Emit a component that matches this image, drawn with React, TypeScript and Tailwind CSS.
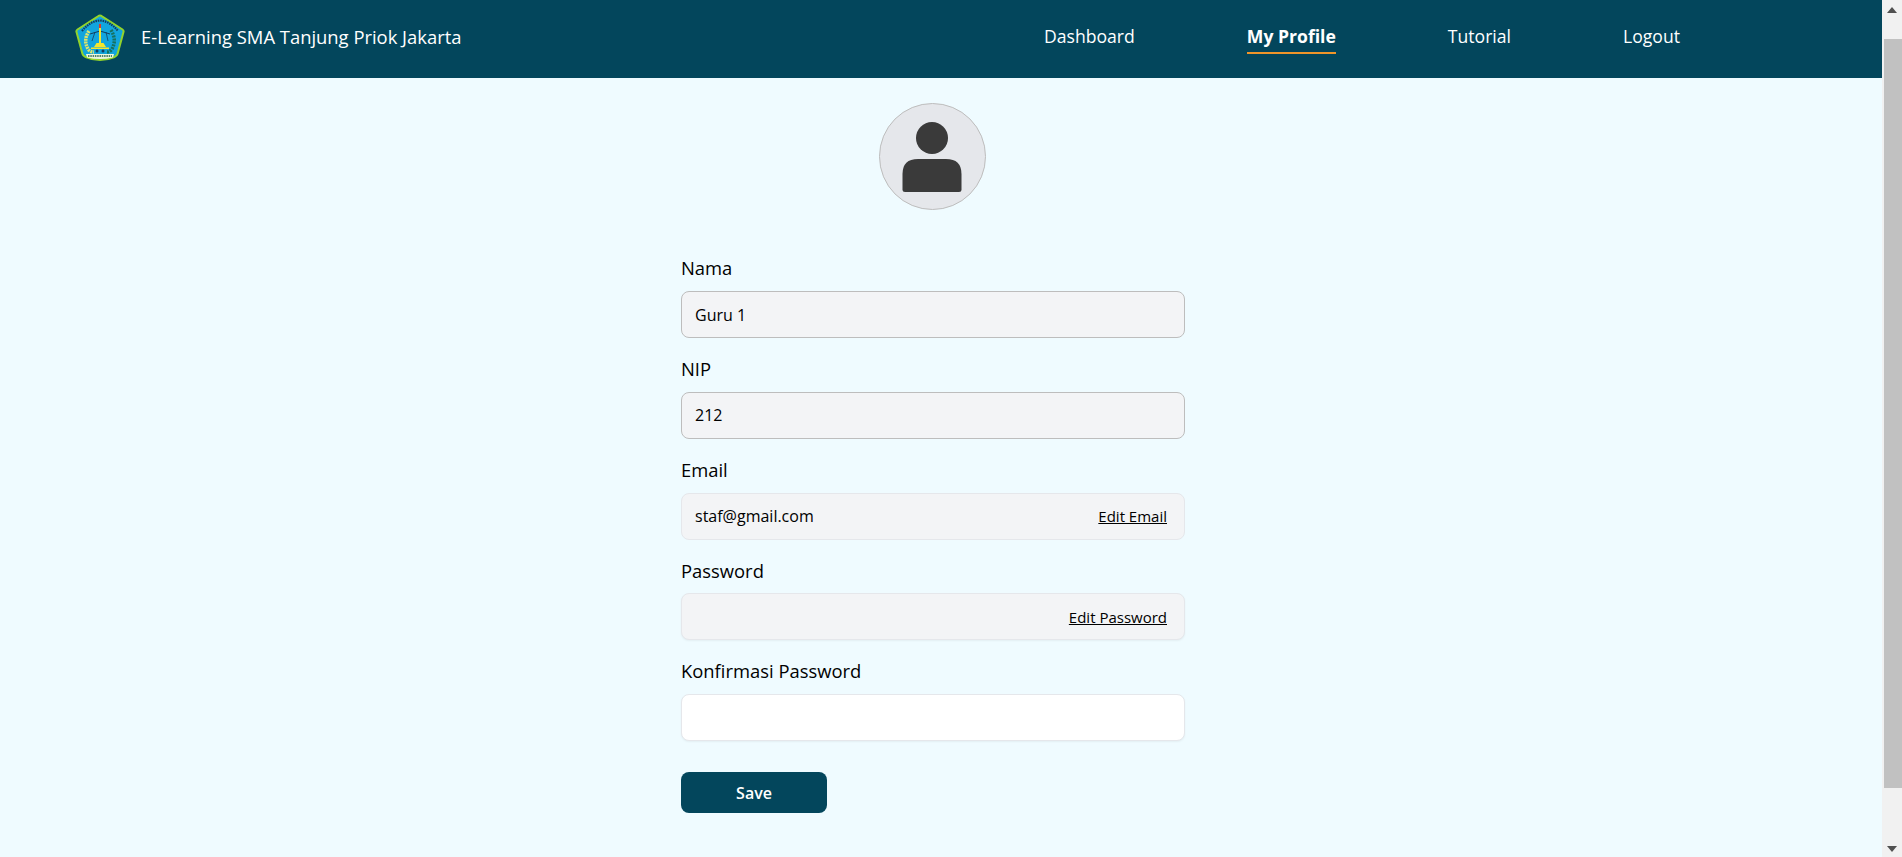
import React from 'react';

const fontStack = "font-['Open_Sans',sans-serif]";

const SchoolLogo: React.FC = () => (
  <svg viewBox="0 0 50 50" className="w-[50px] h-[50px] shrink-0">
    <path d="M25 1.500 Q26 1.500 27 2.300 L47.500 15.500 Q49 16.500 48.500 18 L42.500 40 Q42 42 39.500 43 Q25 49 10.500 43 Q8 42 7.500 40 L1.500 18 Q1 16.500 2.500 15.500 L23 2.300 Q24 1.500 25 1.500 Z" fill="#12a5dd" stroke="#93d32b" strokeWidth="2" strokeLinejoin="round" />
    {/* lettering arc */}
    <path d="M7 17 Q15 7 25 6.500 Q35 7 43 17" fill="none" stroke="#123f5f" strokeWidth="2.200" strokeDasharray="1.600 0.800" />
    {/* scales */}
    <path d="M15 20 L25 17 L35 20" fill="none" stroke="#123f5f" strokeWidth="1" />
    <path d="M20 18 L17 27 M31 18 L33 27" fill="none" stroke="#123f5f" strokeWidth="0.800" />
    {/* tower */}
    <path d="M24 14h2v15h-2z" fill="#f4e72e" />
    <path d="M24 10h2v4h-2z" fill="#d93a2e" />
    <path d="M21.500 29h7l2.500 4h-12z" fill="#f4e72e" />
    <path d="M16 33.500h18v1.500H16z" fill="#f4e72e" />
    <circle cx="22" cy="37" r="1.500" fill="#123f5f" />
    <circle cx="28" cy="37" r="1.500" fill="#123f5f" />
    {/* rice and cotton */}
    <path d="M14 17 Q8 26 13 35 Q15 38 19 38" fill="none" stroke="#dfe56b" strokeWidth="3.500" strokeDasharray="2 0.800" />
    <path d="M36 16 Q42 26 37 35 Q35 38 32 38" fill="none" stroke="#16715f" strokeWidth="3.500" strokeDasharray="2 1" />
    {/* banner */}
    <path d="M11 40 H39 L38 43.500 Q25 46.500 12 43.500 Z" fill="#eef6dd" />
    <path d="M13 42 H37" stroke="#1f5d48" strokeWidth="1.600" strokeDasharray="1.500 0.800" />
  </svg>
);

const AvatarIcon: React.FC = () => (
  <div className="w-[107px] h-[107px] mr-[2px] rounded-full bg-[#e5e7eb] border border-[#bdbdbd] flex flex-col items-center justify-center">
    <svg viewBox="0 0 60 70" className="w-[60px] h-[70px]">
      <circle cx="30" cy="16" r="16" fill="#3a3a3a" />
      <path d="M0.500 68 V52 Q0.500 37 16 37 H44 Q59.500 37 59.500 52 V68 Q59.500 70 57 70 H3 Q0.500 70 0.500 68 Z" fill="#3a3a3a" />
    </svg>
  </div>
);

const Field: React.FC<{ label: string; children: React.ReactNode }> = ({ label, children }) => (
  <div className="flex flex-col gap-[10px]">
    <label className="text-[18.4px] leading-[25.75px] text-black">{label}</label>
    {children}
  </div>
);

const NavLink: React.FC<{ label: string; active?: boolean }> = ({ label, active }) => (
  <a className={`text-[17.6px] leading-[25px] text-white pb-[3px] border-b-2 ${active ? 'font-bold border-[#f0952a]' : 'font-medium border-transparent'}`}>
    {label}
  </a>
);

export default function App() {
  return (
    <div className={`flex h-screen overflow-hidden bg-[#effbff] ${fontStack}`}>
      <div className="flex-1 min-w-0">
        <header className="h-[78px] bg-[#03465c] flex items-center pl-[75px] pr-[202px]">
          <SchoolLogo />
          <span className="ml-4 mb-[5px] text-[18.4px] font-medium text-white">E-Learning SMA Tanjung Priok Jakarta</span>
          <nav className="ml-auto flex items-center gap-[112px]">
            <NavLink label="Dashboard" />
            <NavLink label="My Profile" active />
            <NavLink label="Tutorial" />
            <NavLink label="Logout" />
          </nav>
        </header>

        <main className="flex flex-col items-center pt-[25px] pr-4">
          <AvatarIcon />
          <form className="w-[504px] mt-[45.25px] flex flex-col gap-[18px]">
            <Field label="Nama">
              <div className="h-[47px] rounded-lg bg-[#f3f4f6] border border-[#bdbdbd] px-[13px] flex items-center text-[16px] text-black">Guru 1</div>
            </Field>
            <Field label="NIP">
              <div className="h-[47px] rounded-lg bg-[#f3f4f6] border border-[#bdbdbd] px-[13px] flex items-center text-[16px] text-black">212</div>
            </Field>
            <Field label="Email">
              <div className="h-[47px] rounded-lg bg-[#f3f4f6] border border-[#e5e7eb] pl-[13px] pr-[17px] flex items-center justify-between text-[16px] text-black">
                <span>staf@gmail.com</span>
                <a className="text-[15px] underline">Edit Email</a>
              </div>
            </Field>
            <Field label="Password">
              <div className="h-[47px] rounded-lg bg-[#f3f4f6] border border-[#e5e7eb] shadow-[0_1px_2px_rgba(0,0,0,0.05)] pl-[13px] pr-[17px] flex items-center justify-end text-black">
                <a className="text-[15px] underline">Edit Password</a>
              </div>
            </Field>
            <Field label="Konfirmasi Password">
              <input type="password" className="h-[47px] rounded-lg bg-white border border-[#e5e7eb] shadow-[0_1px_2px_rgba(0,0,0,0.05)] px-[13px] outline-none" />
            </Field>
            <button type="button" className="mt-[13px] w-[146px] h-[41px] rounded-lg bg-[#03465c] text-white text-[16px] font-semibold">Save</button>
          </form>
        </main>
      </div>

      {/* scrollbar */}
      <aside className="w-[20px] shrink-0 bg-[#f1f1f1] flex flex-col items-center">
        <div className="h-[17px] flex items-center justify-center pt-[2px] text-[#505050]">
          <svg viewBox="0 0 10 6" className="w-[10px] h-[6px]"><path d="M5 0 L10 6 H0 Z" fill="currentColor" /></svg>
        </div>
        <div className="w-full pl-[2px] mt-[22px]"><div className="h-[749px] bg-[#c1c1c1]" /></div>
        <div className="mt-auto h-[17px] flex items-center justify-center text-[#505050]">
          <svg viewBox="0 0 10 6" className="w-[10px] h-[6px]"><path d="M0 0 H10 L5 6 Z" fill="currentColor" /></svg>
        </div>
      </aside>
    </div>
  );
}
